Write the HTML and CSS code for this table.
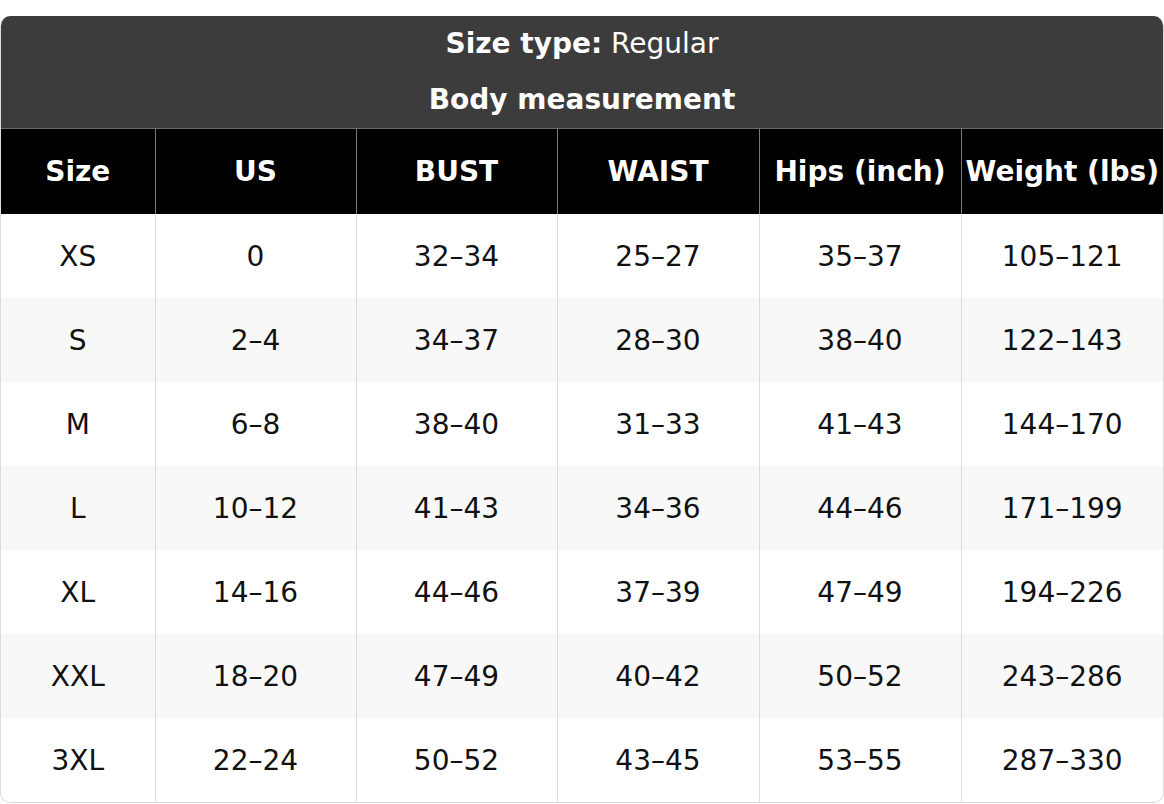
FILE: index.html
```html
<!DOCTYPE html>
<html>
<head>
<meta charset="utf-8">
<link rel="stylesheet" href="styles.css">
</head>
<body>
<div class="card">
  <div class="title">
    <div class="title-line"><b>Size type:</b> Regular</div>
    <div class="title-line"><b>Body measurement</b></div>
  </div>
  <table class="chart">
    <colgroup>
      <col class="c1"><col class="c2"><col class="c3"><col class="c4"><col class="c5"><col class="c6">
    </colgroup>
    <thead>
      <tr><th>Size</th><th>US</th><th>BUST</th><th>WAIST</th><th>Hips (inch)</th><th>Weight (lbs)</th></tr>
    </thead>
    <tbody>
      <tr><td>XS</td><td>0</td><td>32–34</td><td>25–27</td><td>35–37</td><td>105–121</td></tr>
      <tr><td>S</td><td>2–4</td><td>34–37</td><td>28–30</td><td>38–40</td><td>122–143</td></tr>
      <tr><td>M</td><td>6–8</td><td>38–40</td><td>31–33</td><td>41–43</td><td>144–170</td></tr>
      <tr><td>L</td><td>10–12</td><td>41–43</td><td>34–36</td><td>44–46</td><td>171–199</td></tr>
      <tr><td>XL</td><td>14–16</td><td>44–46</td><td>37–39</td><td>47–49</td><td>194–226</td></tr>
      <tr><td>XXL</td><td>18–20</td><td>47–49</td><td>40–42</td><td>50–52</td><td>243–286</td></tr>
      <tr><td>3XL</td><td>22–24</td><td>50–52</td><td>43–45</td><td>53–55</td><td>287–330</td></tr>
    </tbody>
  </table>
</div>
</body>
</html>
```
FILE: styles.css
```css
html, body {
  margin: 0;
  padding: 0;
  background: #ffffff;
}
body {
  padding-top: 16px;
  font-family: "DejaVu Sans", sans-serif;
  font-size: 28px;
  color: #111;
}
.card {
  width: 1164px;
  box-sizing: border-box;
  border: 1px solid #dcdcdc;
  border-top: none;
  border-radius: 10px;
  overflow: hidden;
}
.title {
  background: #3c3c3c;
  color: #ffffff;
  text-align: center;
  border-bottom: 1px solid #6a6a6a;
}
.title-line {
  height: 56px;
  line-height: 56px;
}
.chart {
  width: 100%;
  border-collapse: collapse;
  table-layout: fixed;
}
.c1 { width: 154px; }
.c2 { width: 201px; }
.c3 { width: 201px; }
.c4 { width: 202px; }
.c5 { width: 202px; }
.chart th {
  background: #000000;
  color: #ffffff;
  font-weight: bold;
  height: 85px;
  padding: 0;
  border-left: 1px solid #7a7a7a;
  white-space: nowrap;
}
.chart th:first-child { border-left: none; }
.chart td {
  height: 84px;
  padding: 0;
  text-align: center;
  border-left: 1px solid #dcdcdc;
}
.chart td:first-child { border-left: none; }
.chart tbody tr:nth-child(even) td { background: #f8f8f8; }
```
